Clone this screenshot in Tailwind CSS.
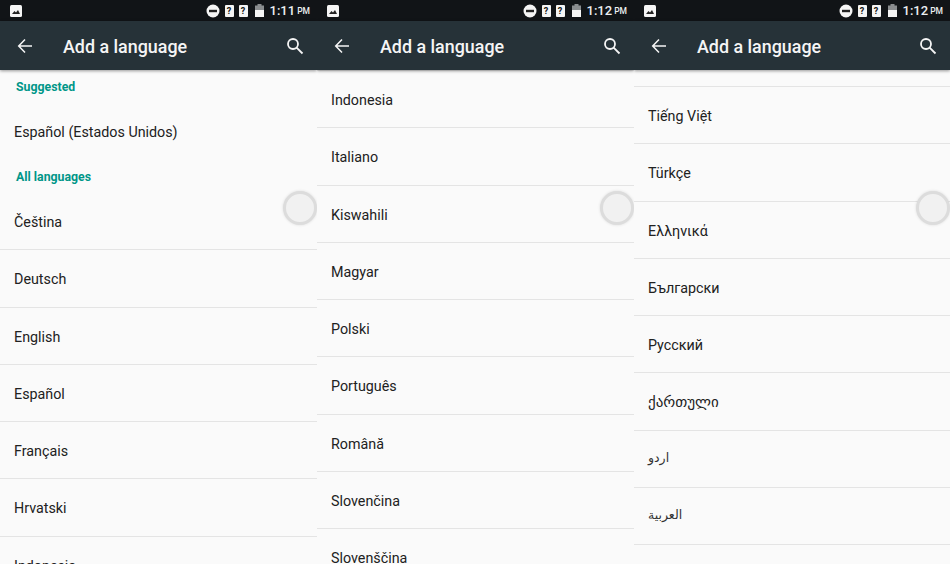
<!DOCTYPE html>
<html lang="en">
<head>
    <meta charset="UTF-8">
    <meta name="viewport" content="width=device-width, initial-scale=1.0">
    <title>Add a language</title>
    <script src="https://cdn.jsdelivr.net/npm/@tailwindcss/browser@4"></script>
</head>
<body class="bg-[#fafafa] font-['Roboto','Noto_Sans','DejaVu_Sans',sans-serif] overflow-hidden">
    <div id="screens" class="flex w-[950px] h-[564px] overflow-hidden"></div>

    <script>
        // One entry per phone screenshot; lead is the scrolled-off remainder above the first row
        const screens = [
            {
                time: '1:11', width: 'w-[317px]', lead: '',
                rows: ['Čeština', 'Deutsch', 'English', 'Español', 'Français', 'Hrvatski', 'Indonesia'],
                suggested: true
            },
            {
                time: '1:12', width: 'w-[317px]', lead: 'h-[1px]',
                rows: ['Indonesia', 'Italiano', 'Kiswahili', 'Magyar', 'Polski', 'Português', 'Română', 'Slovenčina', 'Slovenščina']
            },
            {
                time: '1:12', width: 'w-[316px]', lead: 'h-[17px]',
                rows: ['Tiếng Việt', 'Türkçe', 'Ελληνικά', 'Български', 'Русский', 'ქართული', 'اردو', 'العربية']
            }
        ];

        // Georgian and Arabic script rows are drawn at a different size on the device
        const defaultRow = 'text-[14.3px] text-[#212121] pt-[3px]';
        const rowStyle = {
            'ქართული': 'text-[15px] text-[#212121] pt-[2px]',
            'اردو': 'text-[12.5px] text-[#333] pb-[2px]',
            'العربية': 'text-[12.5px] text-[#333] pb-[1px]'
        };

        const statusBar = (time) => `
            <div class="h-[21px] bg-[#111417] flex items-center pl-[10px] pr-[7px] text-[#eceff1] shrink-0">
                <svg width="12" height="12" viewBox="0 0 12 12"><rect width="12" height="12" rx="1.5" fill="#f5f5f5"/><path d="M2 9l2.5-3 1.5 1.5L8 5l2 4z" fill="#222"/></svg>
                <div class="ml-auto flex items-center">
                    <svg width="14" height="14" viewBox="0 0 14 14"><circle cx="7" cy="7" r="6.5" fill="#f5f5f5"/><rect x="3" y="5.8" width="8" height="2.4" fill="#222"/></svg>
                    <div class="ml-[5px] w-[9px] h-[12px] rounded-[1px] bg-[#f5f5f5] text-[#111] text-[9px] leading-[12px] font-bold text-center">?</div>
                    <div class="ml-[5px] w-[9px] h-[12px] rounded-[1px] bg-[#f5f5f5] text-[#111] text-[9px] leading-[12px] font-bold text-center">?</div>
                    <svg class="ml-[7px]" width="9" height="13" viewBox="0 0 9 13"><rect x="2.5" width="4" height="2" fill="#8a8d8f"/><rect y="1.5" width="9" height="4.5" fill="#8a8d8f"/><rect y="6" width="9" height="7" fill="#f5f5f5"/></svg>
                    <span class="ml-[6px] text-[13px] font-medium">${time}</span>
                    <span class="ml-[2px] text-[8.5px] font-medium mt-[2px]">PM</span>
                </div>
            </div>`;

        const toolbar = `
            <div class="relative z-10 h-[49px] bg-[#263238] flex items-center pl-[17px] pr-[13px] text-white shrink-0 shadow-[0_1px_3px_rgba(0,0,0,0.4)]">
                <svg width="16" height="16" viewBox="0 0 16 16" fill="none" stroke="#f5f5f5" stroke-width="1.5"><path d="M15 8H2M8 1.5L1.7 8 8 14.5"/></svg>
                <span class="ml-[30px] mt-[4px] text-[17.9px] font-medium text-[#f5f5f5]">Add a language</span>
                <svg class="ml-auto" width="18" height="18" viewBox="0 0 18 18" fill="none" stroke="#f5f5f5" stroke-width="1.8"><circle cx="7" cy="7" r="5"/><path d="M10.6 10.6L16.5 16.5"/></svg>
            </div>`;

        const header = (label, cls) => `<div class="${cls} h-[34px] shrink-0 pl-[16px] flex items-center text-[12.3px] font-bold text-[#009688]">${label}</div>`;

        const row = (label) => `
            <div class="h-[57.3px] shrink-0 pl-[14px] flex items-center border-b-[1.5px] border-[#e4e4e4] ${rowStyle[label] || defaultRow}">${label}</div>`;

        const suggestedBlock = `
            ${header('Suggested', 'pt-[1px]')}
            <div class="h-[55px] shrink-0 pl-[14px] pt-[2px] flex items-center text-[14.3px] text-[#212121]">Español (Estados Unidos)</div>
            ${header('All languages', 'pt-[3px]')}`;

        document.getElementById('screens').innerHTML = screens.map((s) => `
            <div class="relative ${s.width} h-full flex flex-col overflow-hidden bg-[#fafafa]">
                ${statusBar(s.time)}
                ${toolbar}
                <div class="flex-1 flex flex-col overflow-hidden">
                    ${s.suggested ? suggestedBlock : `<div class="${s.lead} shrink-0 border-b-[1.5px] border-[#e4e4e4]"></div>`}
                    ${s.rows.map(row).join('')}
                </div>
                <div class="absolute right-0 top-[191px] w-[34px] h-[34px] rounded-full bg-[#f1f1f1] border-[3px] border-[#dcdcdc] shadow-[0_0_3px_rgba(0,0,0,0.12)]"></div>
            </div>`).join('');
    </script>
</body>
</html>
